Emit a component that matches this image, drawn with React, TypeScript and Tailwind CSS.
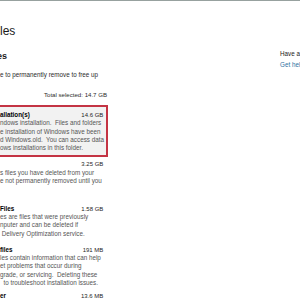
import React from "react";

type ItemProps = {
  title: string;
  size: string;
  lines: string[];
  className: string;
};

function Item({ title, size, lines, className }: ItemProps) {
  return (
    <div className={className}>
      <div className="flex justify-between text-[6.3px] leading-[8.33px]">
        <span className="font-bold text-black whitespace-pre">{title}</span>
        <span className="text-[6px] text-[#262626]">{size}</span>
      </div>
      {lines.map((l, i) => (
        <div key={i} className="text-[6.3px] leading-[8.33px] text-[#555555] whitespace-pre">
          {l}
        </div>
      ))}
    </div>
  );
}

export default function App() {
  return (
    <div className="w-[300px] h-[300px] overflow-hidden bg-white font-['Liberation_Sans',Arial,sans-serif] text-[#1b1b1b]">
      <div className="h-[1px] bg-[#97a19f]" />
      <div className="flex">
        <div className="w-[108px] shrink-0 flex flex-col">
          <div className="mt-[23.8px] text-[12px] leading-[12px] text-[#1a1a1a]">les</div>
          <div className="mt-[15.6px] text-[9px] leading-[9px] font-bold text-[#1a1a1a] -ml-[3px]">es</div>
          <div className="mt-[9.55px] text-[6.3px] leading-[8.33px] text-[#2b2b2b]">
            e to permanently remove to free up
          </div>
          <div className="mt-[12.07px] text-[6.1px] leading-[8.33px] text-[#2b2b2b] text-right pr-[1px]">
            Total selected: 14.7 GB
          </div>
          <Item
            className="mt-[5.32px] border-2 border-l-0 border-[#c43444] bg-[#f2f2f2] pt-[4px] pb-[2.35px] pr-[2.7px]"
            title="allation(s)"
            size="14.6 GB"
            lines={[
              "ndows installation.  Files and folders",
              "e installation of Windows have been",
              "d Windows.old.  You can access data",
              "ows installations in this folder.",
            ]}
          />
          <Item
            className="mt-[3.35px] pr-[4.7px]"
            title=""
            size="3.25 GB"
            lines={["s files you have deleted from your", "e not permanently removed until you"]}
          />
          <Item
            className="mt-[19.3px] pr-[4.7px]"
            title="Files"
            size="1.58 GB"
            lines={[
              "es are files that were previously",
              "nputer and can be deleted if",
              " Delivery Optimization service.",
            ]}
          />
          <Item
            className="mt-[7.68px] pr-[4.7px]"
            title="files"
            size="191 MB"
            lines={[
              "les contain information that can help",
              "et problems that occur during",
              "grade, or servicing.  Deleting these",
              "  to troubleshoot installation issues.",
            ]}
          />
          <Item className="mt-[4.65px] pr-[4.7px]" title="er" size="13.6 MB" lines={[]} />
        </div>
        <div className="ml-[172px] flex flex-col whitespace-nowrap">
          <div className="mt-[48.65px] text-[6.3px] leading-[8.33px] text-[#1a1a1a]">Have a question?</div>
          <div className="mt-[3.37px] text-[6.3px] leading-[8.33px] text-[#2f6f9f]">Get help</div>
        </div>
      </div>
    </div>
  );
}
